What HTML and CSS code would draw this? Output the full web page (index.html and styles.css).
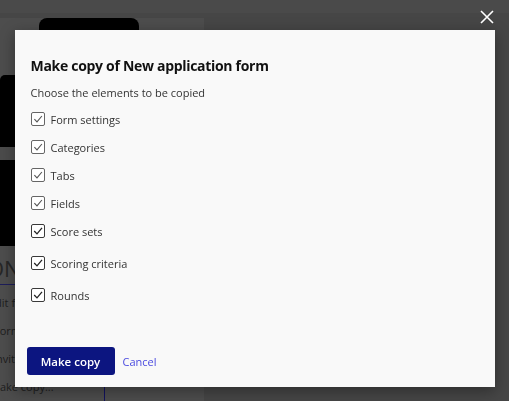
FILE: index.html
```html
<!DOCTYPE html>
<html lang="en">
<head>
<meta charset="utf-8">
<title>Make copy</title>
<link rel="stylesheet" href="styles.css">
</head>
<body>
<div class="page">
  <div class="topbar"></div>
  <div class="content">
    <div class="card">
      <div class="tab"></div>
      <div class="hero"><div class="hero-band"></div></div>
      <div class="heading">ON</div>
      <div class="nav">
        <div class="nav-item n1">Edit form</div>
        <div class="nav-item n2">Form settings</div>
        <div class="nav-item n3">Invite</div>
        <div class="nav-item n4">Make copy...</div>
      </div>
    </div>
  </div>
</div>

<div class="overlay">
  <button class="close" aria-label="Close">
    <svg width="14" height="14" viewBox="0 0 14 14"><path d="M1 1L13 13M13 1L1 13" stroke="#fff" stroke-width="1.6" fill="none"/></svg>
  </button>
  <div class="modal">
    <h2 class="modal-title">Make copy of New application form</h2>
    <p class="modal-sub">Choose the elements to be copied</p>
    <div class="options">
      <label class="opt"><span class="box"><svg viewBox="0 0 12 12"><path d="M2.4 6.1L5 8.9L9.9 3" stroke="#555" stroke-width="1.1" fill="none"/></svg></span>Form settings</label>
      <label class="opt"><span class="box"><svg viewBox="0 0 12 12"><path d="M2.4 6.1L5 8.9L9.9 3" stroke="#555" stroke-width="1.1" fill="none"/></svg></span>Categories</label>
      <label class="opt"><span class="box"><svg viewBox="0 0 12 12"><path d="M2.4 6.1L5 8.9L9.9 3" stroke="#555" stroke-width="1.1" fill="none"/></svg></span>Tabs</label>
      <label class="opt"><span class="box"><svg viewBox="0 0 12 12"><path d="M2.4 6.1L5 8.9L9.9 3" stroke="#555" stroke-width="1.1" fill="none"/></svg></span>Fields</label>
      <label class="opt opt-b"><span class="box box-b"><svg viewBox="0 0 12 12"><path d="M2.2 6L5 8.9L10 2.9" stroke="#222" stroke-width="1.3" fill="none"/></svg></span>Score sets</label>
      <label class="opt opt-b spaced"><span class="box box-b"><svg viewBox="0 0 12 12"><path d="M2.2 6L5 8.9L10 2.9" stroke="#222" stroke-width="1.3" fill="none"/></svg></span>Scoring criteria</label>
      <label class="opt opt-b spaced"><span class="box box-b"><svg viewBox="0 0 12 12"><path d="M2.2 6L5 8.9L10 2.9" stroke="#222" stroke-width="1.3" fill="none"/></svg></span>Rounds</label>
    </div>
    <div class="footer">
      <button class="btn-primary">Make copy</button>
      <a class="link" href="#">Cancel</a>
    </div>
  </div>
</div>
</body>
</html>
```

FILE: styles.css
```css
html, body {
  margin: 0;
  padding: 0;
}
body {
  width: 509px;
  height: 401px;
  overflow: hidden;
  background: #464646;
  font-family: "Open Sans", "Noto Sans", sans-serif;
}
.page {
  display: flex;
  flex-direction: column;
}
.topbar {
  height: 13px;
  background: #4a4a4a;
}
.content {
  padding-top: 5px;
}
.card {
  width: 204px;
  height: 383px;
  background: #4d4d4d;
  display: flex;
  flex-direction: column;
}
.tab {
  margin-left: 39px;
  width: 100px;
  height: 20px;
  background: #000;
  border-radius: 8px 8px 0 0;
}
.hero {
  margin-top: 37px;
  width: 15px;
  height: 172px;
  background: #000;
  border-radius: 5px 0 0 0;
  padding-top: 72px;
  box-sizing: border-box;
}
.hero-band {
  height: 13px;
  background: #4b4b4b;
}
.heading {
  margin-left: -13px;
  margin-top: 8px;
  font-size: 22px;
  line-height: 28px;
  color: #262626;
  width: 117px;
  border-bottom: 1px solid #1d1d5a;
  padding-bottom: 2px;
  white-space: nowrap;
}
.nav {
  width: 104px;
  border-right: 1px solid #12125e;
  flex: 1;
  padding-top: 4px;
}
.nav-item {
  font-size: 11px;
  line-height: 28px;
  color: #1e1e1e;
  white-space: nowrap;
}
.n1 { margin-left: -11px; }
.n2 { margin-left: -6px; }
.n3 { margin-left: -7px; }
.n4 { margin-left: -10px; }

.overlay {
  position: fixed;
  inset: 0;
  display: flex;
  justify-content: center;
  align-items: flex-start;
  padding-top: 30px;
}
.close {
  position: absolute;
  top: 9px;
  right: 14px;
  width: 16px;
  height: 16px;
  padding: 0;
  border: 0;
  background: none;
  display: flex;
  align-items: center;
  justify-content: center;
}
.modal {
  width: 480px;
  height: 357px;
  box-sizing: border-box;
  background: #f9f9f9;
  padding: 26px 16px 12px 16px;
  box-shadow: 0 4px 14px rgba(0, 0, 0, 0.35);
  display: flex;
  flex-direction: column;
}
.modal-title {
  margin: 0;
  font-size: 14px;
  line-height: 20px;
  font-weight: 700;
  letter-spacing: -0.3px;
  color: #111;
}
.modal-sub {
  margin: 9px 0 4px;
  font-size: 11px;
  line-height: 16px;
  color: #333;
}
.options {
  display: flex;
  flex-direction: column;
}
.opt {
  height: 28px;
  display: flex;
  align-items: center;
  gap: 6px;
  font-size: 11px;
  color: #333;
}
.opt-b { gap: 6px; }
.spaced { margin-top: 4px; }
.box {
  width: 14px;
  height: 14px;
  box-sizing: border-box;
  border: 1px solid #666;
  border-radius: 2px;
  background: #fff;
  display: flex;
}
.box-b {
  border-color: #3a3a3a;
}
.box svg {
  width: 100%;
  height: 100%;
}
.footer {
  margin-top: auto;
  margin-left: -4px;
  display: flex;
  align-items: center;
  gap: 8px;
}
.btn-primary {
  width: 88px;
  height: 28px;
  border: 0;
  border-radius: 3px;
  background: #0c1580;
  color: #fff;
  font-family: "Open Sans", "Noto Sans", sans-serif;
  font-size: 11.5px;
  font-weight: 600;
  padding: 0;
}
.link {
  font-size: 11px;
  color: #4b4be0;
  text-decoration: none;
}
```
